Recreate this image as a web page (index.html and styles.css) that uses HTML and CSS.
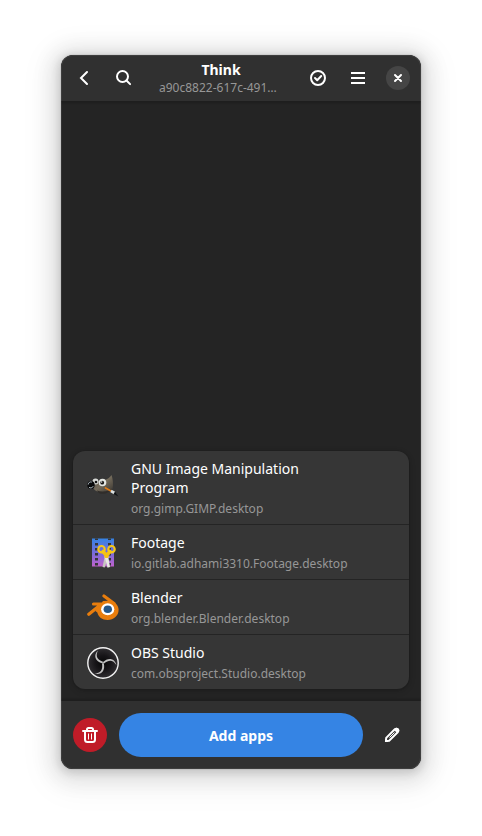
FILE: index.html
```html
<!DOCTYPE html>
<html lang="en">
<head>
<meta charset="utf-8">
<meta name="viewport" content="width=device-width, initial-scale=1">
<title>Think</title>
<link rel="stylesheet" href="styles.css">
</head>
<body>
<div class="window">
  <header class="header">
    <div class="header-side">
      <button class="icon-button" type="button" aria-label="Back">
        <svg width="16" height="16" viewBox="0 0 16 16"><path class="stroke" d="M11 2 5 8l6 6" stroke-linecap="round"/></svg>
      </button>
      <button class="icon-button" type="button" aria-label="Search">
        <svg width="16" height="16" viewBox="0 0 16 16"><circle class="stroke" cx="6.500" cy="6.500" r="5.500"/><path class="stroke" d="m10.500 10.500 3.600 3.600" stroke-linecap="round"/></svg>
      </button>
    </div>
    <div class="heading">
      <h1 class="title">Think</h1>
      <p class="subtitle">a90c8822-617c-491…</p>
    </div>
    <div class="header-side">
      <button class="icon-button" type="button" aria-label="Select">
        <svg width="16" height="16" viewBox="0 0 16 16"><circle class="stroke" cx="8" cy="8" r="7"/><path class="stroke" d="m5 8 2.200 2.200L11.200 6" stroke-linecap="round" stroke-linejoin="round"/></svg>
      </button>
      <button class="icon-button" type="button" aria-label="Menu">
        <svg width="16" height="16" viewBox="0 0 16 16"><path class="fill" d="M1 2h14v2H1zM1 7h14v2H1zM1 12h14v2H1z"/></svg>
      </button>
      <button class="close-button" type="button" aria-label="Close">
        <svg width="16" height="16" viewBox="0 0 16 16"><path class="stroke" d="m5 5 6 6m0-6-6 6" stroke-linecap="round"/></svg>
      </button>
    </div>
  </header>

  <main class="content">
    <ul class="apps">
      <li class="app">
        <svg width="32" height="32" viewBox="0 0 32 32">
          <defs>
            <linearGradient id="fur" x1="0" y1="0" x2="1" y2="1"><stop offset="0" stop-color="#504a42"/><stop offset=".5" stop-color="#746b5b"/><stop offset="1" stop-color="#38342f"/></linearGradient>
          </defs>
          <path fill="url(#fur)" d="M5 9c5 1 9 0 13-1 3-1 5-3 6.500-5 1.500 4 2 10 1 14-2 3-6 4-11 4-5-1-9-4-9.500-8z"/>
          <path fill="#302d2a" d="M10 18.500c4 1.500 8 1 12 0l3-2c-2 4-7 6-12 5-1.500-.5-2.500-1.500-3-3z"/>
          <circle cx="8.500" cy="9.500" r="3" fill="#d8dad6"/><circle cx="9" cy="10" r="1.300" fill="#111"/>
          <circle cx="15.500" cy="10.500" r="3.800" fill="#e4e6e2"/><circle cx="15.200" cy="10.700" r="1.900" fill="#111"/><circle cx="14.700" cy="10" r=".7" fill="#fff"/>
          <ellipse cx="4" cy="13" rx="3.700" ry="4" fill="#08090a"/>
          <path d="M1.200 12.500c.3-2 1.800-3 3.600-2.400M2 15.200c1 1.300 3.400.9 4.200-1" fill="none" stroke="#b4c0c8" stroke-width="1"/>
          <path d="m18.500 16 5.500 3" stroke="#df7b16" stroke-width="1.800" stroke-linecap="round"/>
          <path d="m24 19 3.500 2" stroke="#dbe0e0" stroke-width="2.600"/>
          <path fill="#111315" d="m28 19.800 1.400 1.900 2 2.800-4.800-2.500z"/>
        </svg>
        <div class="app-text"><h2 class="app-name">GNU Image Manipulation Program</h2><p class="app-id">org.gimp.GIMP.desktop</p></div>
      </li>
      <li class="app">
        <svg width="32" height="32" viewBox="0 0 32 32">
          <defs><linearGradient id="film" x1="0" y1="0" x2="0" y2="1"><stop offset="0" stop-color="#3584e4"/><stop offset=".5" stop-color="#756bdc"/><stop offset="1" stop-color="#c061cb"/></linearGradient></defs>
          <path fill="url(#film)" d="M5 1.500h22v28H5z"/>
          <path fill="#363636" d="M8 1.500h3v1.500H8zM21 1.500h3v1.500h-3zM8 6h3v2.500H8zM21 6h3v2.500h-3zM8 11h3v2.500H8zM21 11h3v2.500h-3zM8 16h3v2.500H8zM21 16h3v2.500h-3zM8 21h3v2.500H8zM21 21h3v2.500h-3zM8 26h3v2.500H8zM21 26h3v2.500h-3z"/>
          <path fill="#c7c4c1" d="m18 18 3.500 1.500-3.800 11-2.200-.5z"/><path fill="#e9e7e4" d="m17.500 19 3.500-1 2 12-2.500.8z"/>
          <path d="m16 14.500 4 4.700M23 14.500l-4 4.700" stroke="#f5c211" stroke-width="3.600" stroke-linecap="round"/>
          <circle cx="14.500" cy="12.200" r="3.200" fill="none" stroke="#f6c719" stroke-width="2.200"/><circle cx="24.500" cy="12.200" r="3.200" fill="none" stroke="#f6c719" stroke-width="2.200"/>
        </svg>
        <div class="app-text"><h2 class="app-name">Footage</h2><p class="app-id">io.gitlab.adhami3310.Footage.desktop</p></div>
      </li>
      <li class="app">
        <svg width="32" height="32" viewBox="0 0 32 32">
          <path d="M1.800 22.200 14.500 12H6.500M17 4l10 7.500" fill="none" stroke="#e87d0d" stroke-width="3.200" stroke-linecap="round" stroke-linejoin="round"/>
          <path fill="#e87d0d" d="m16 9 8-.5c4.500 2 7.600 5 7.600 9.300 0 6-4.800 10.200-11 10.200-5.500 0-9.300-3-10.300-7.500l-2-1.500z"/>
          <ellipse cx="20.700" cy="17.300" rx="6.600" ry="6" fill="#fff"/>
          <ellipse cx="20.800" cy="17.300" rx="4.200" ry="3.800" fill="#265787"/>
        </svg>
        <div class="app-text"><h2 class="app-name">Blender</h2><p class="app-id">org.blender.Blender.desktop</p></div>
      </li>
      <li class="app">
        <svg width="32" height="32" viewBox="0 0 32 32">
          <defs>
            <radialGradient id="lens"><stop offset="0" stop-color="#060606"/><stop offset=".5" stop-color="#171518"/><stop offset="1" stop-color="#302e31"/></radialGradient>
            <path id="blade" d="M11 3.500C8.500 8.500 9.500 12.500 16 14.800l-.4 1.800C8 14.500 6 8 11 3.500z"/>
          </defs>
          <circle cx="16" cy="16" r="15.200" fill="url(#lens)" stroke="#f2f2f2" stroke-width="1.400"/>
          <g fill="#c0c0c0">
            <use href="#blade"/>
            <use href="#blade" transform="rotate(120 16 16)"/>
            <use href="#blade" transform="rotate(240 16 16)"/>
          </g>
        </svg>
        <div class="app-text"><h2 class="app-name">OBS Studio</h2><p class="app-id">com.obsproject.Studio.desktop</p></div>
      </li>
    </ul>
  </main>

  <footer class="footer">
    <button class="delete-button" type="button" aria-label="Delete">
      <svg width="16" height="16" viewBox="0 0 16 16"><path class="stroke" d="M1 4h14M5 3.500V2.500Q5 1 6.500 1h3Q11 1 11 2.500v1M3 4v8.500Q3 15 5.500 15h5Q13 15 13 12.500V4" stroke-linecap="round"/><path class="thin" d="M6.500 6.500v6M9.500 6.500v6"/></svg>
    </button>
    <button class="add-button" type="button">Add apps</button>
    <button class="icon-button" type="button" aria-label="Edit">
      <svg width="16" height="16" viewBox="0 0 16 16"><path class="stroke" d="m2 14 .2-3.100 8.600-8.600c2-2 4.900 1 2.900 2.900l-8.600 8.600z"/><path class="thin" d="m5.500 10.500 5-5"/><path class="fill" d="m9.800 2.800 1.200-1.300c1-1 2.500-.8 3.500.2s1 2.300 0 3.300l-1.300 1.300zM1 15v-3.500L4.500 15z"/></svg>
    </button>
  </footer>
</div>
</body>
</html>
```

FILE: styles.css
```css
* {
  box-sizing: border-box;
}

body {
  margin: 0;
  min-height: 100vh;
  padding: 55px 61px 67px;
  display: flex;
  background: #fff;
  color: #fff;
  font: 14px/19px "Noto Sans", sans-serif;
}

h1, h2, p, ul {
  margin: 0;
  padding: 0;
  font-size: inherit;
  font-weight: 400;
}

button {
  display: flex;
  align-items: center;
  justify-content: center;
  flex: none;
  padding: 0;
  border: 0;
  background: none;
  color: inherit;
  font: inherit;
}

svg {
  display: block;
  flex: none;
}

.stroke {
  fill: none;
  stroke: currentColor;
  stroke-width: 2;
}

.thin {
  fill: none;
  stroke: currentColor;
  stroke-width: 1;
}

.fill {
  fill: currentColor;
}

.window {
  position: relative;
  flex: 1;
  min-width: 0;
  display: flex;
  flex-direction: column;
  overflow: hidden;
  border-radius: 12px;
  background: #242424;
  box-shadow: 0 2px 8px 2px rgba(0, 0, 0, .13), 0 3px 20px 10px rgba(0, 0, 0, .09), 0 6px 32px 16px rgba(0, 0, 0, .04), 0 0 0 1px rgba(0, 0, 0, .05);
}

.window::after {
  content: "";
  position: absolute;
  inset: 0;
  border-radius: 12px;
  box-shadow: inset 0 0 0 1px rgba(255, 255, 255, .07);
  pointer-events: none;
}

.header {
  display: flex;
  align-items: center;
  justify-content: space-between;
  min-height: 47px;
  padding: 0 6px;
  background: #303030;
  border-bottom: 1px solid #1e1e1e;
  box-shadow: 0 1px 2px rgba(0, 0, 0, .2);
}

.header-side {
  display: flex;
  align-items: center;
  gap: 6px;
}

.icon-button {
  width: 34px;
  height: 34px;
}

.close-button {
  width: 24px;
  height: 24px;
  margin: 0 5px;
  border-radius: 50%;
  background: #454545;
}

.heading {
  width: 124px;
  white-space: nowrap;
}

.title {
  line-height: 18px;
  font-weight: 700;
  text-align: center;
}

.subtitle, .app-id {
  color: #979797;
  font-size: 12px;
  line-height: 17px;
}

.content {
  flex: 1;
  display: flex;
  flex-direction: column;
  justify-content: flex-end;
  padding: 12px 12px 11px;
}

.apps {
  list-style: none;
  border-radius: 12px;
  background: #363636;
  box-shadow: 0 0 0 1px rgba(0, 0, 0, .04), 0 1px 3px 1px rgba(0, 0, 0, .1), 0 2px 6px 2px rgba(0, 0, 0, .05);
}

.app {
  display: flex;
  align-items: center;
  gap: 12px;
  padding: 8px 14px 7px;
}

.app + .app {
  border-top: 1px solid #242424;
}

.app-text {
  min-width: 0;
}

.app-name {
  max-width: 208px;
}

.app-id {
  margin-top: 3px;
}

.footer {
  display: flex;
  align-items: center;
  gap: 12px;
  padding: 12px;
  background: #303030;
  border-top: 1px solid #1e1e1e;
  box-shadow: 0 -1px 2px rgba(0, 0, 0, .2);
}

.delete-button {
  width: 34px;
  height: 34px;
  border-radius: 50%;
  background: #c01c28;
}

.add-button {
  flex: 1;
  height: 44px;
  border-radius: 22px;
  background: #3584e4;
  font-weight: 700;
}
```
